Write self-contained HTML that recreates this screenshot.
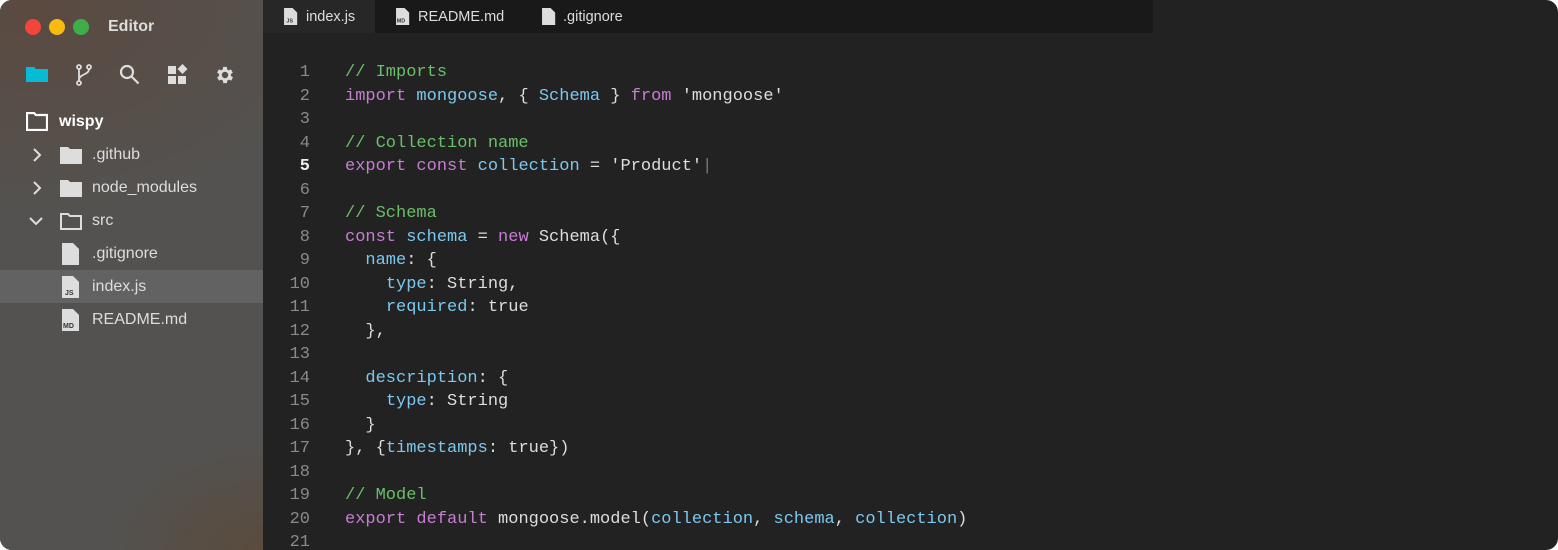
<!DOCTYPE html>
<html><head><style>
*{margin:0;padding:0;box-sizing:border-box}
body{width:1558px;height:550px;background:#fff;overflow:hidden;font-family:"Liberation Sans",sans-serif}
.win{position:absolute;left:0;top:0;width:1558px;height:550px;border-radius:12px;overflow:hidden;background:#222}
.side{position:absolute;left:0;top:0;width:263px;height:550px;background:radial-gradient(ellipse 320px 220px at 30px 0px,#5b4a40,rgba(83,82,80,0) 100%),radial-gradient(ellipse 160px 110px at 263px 550px,#5a4b3d,rgba(83,82,80,0) 100%),#535250}
.dot{position:absolute;top:19px;width:16px;height:16px;border-radius:50%}
.title{position:absolute;left:108px;top:18px;color:#ddd;font-size:16px;font-weight:bold}
.ic{position:absolute;top:64px}
.row{position:absolute;left:0;width:263px;height:33px;color:#ddd;font-size:16px}
.row span{position:absolute;top:8px}
.tabs{position:absolute;left:263px;top:0;width:890px;height:33px;background:#191919}
.tab{position:absolute;top:0;height:33px;color:#ddd;font-size:14.5px}
.tab span{position:absolute;top:9px}
pre{position:absolute;top:61px;font-family:"Liberation Mono",monospace;font-size:17px;line-height:23.5px;color:#ddd}
.ln{left:270px;width:40px;text-align:right;color:#8a8a8a}
.k{color:#c77dd3}.b{color:#7cc8ef}.g{color:#6abf69}
</style></head><body><div class="win">
<div class="side">
<div class="dot" style="left:25px;background:#f2453c"></div>
<div class="dot" style="left:49px;background:#f8bb10"></div>
<div class="dot" style="left:73px;background:#3fae4a"></div>
<div class="title">Editor</div>
<svg class="ic" style="left:26px" width="22" height="20" viewBox="0 0 22 20"><path d="M0 3h8l2 2h12v13H0z" fill="#06bcd4"/></svg>
<svg class="ic" style="left:74px" width="20" height="22" viewBox="0 0 20 22" fill="none" stroke="#ddd" stroke-width="1.8"><circle cx="5" cy="3" r="2"/><circle cx="15" cy="3" r="2"/><circle cx="5" cy="19" r="2"/><path d="M5 5v12M15 5c0 6-10 5-10 11"/></svg>
<svg class="ic" style="left:119px" width="22" height="22" viewBox="0 0 22 22" fill="none" stroke="#ddd" stroke-width="2.2"><circle cx="8" cy="8" r="6"/><path d="M12.5 12.5l7 7"/></svg>
<svg class="ic" style="left:167px" width="22" height="22" viewBox="0 0 22 22" fill="#ddd"><rect x="1" y="2" width="8" height="8"/><rect x="1" y="12" width="8" height="8"/><rect x="11" y="12" width="8" height="8"/><path d="M15.5 0l5 5-5 5-5-5z"/></svg>
<svg class="ic" style="left:214px" width="22" height="22" viewBox="0 0 24 24"><path fill="#ddd" d="M19.4 13a7.5 7.5 0 000-2l2.1-1.6-2-3.5-2.5 1a7 7 0 00-1.7-1L15 3.2h-4l-.4 2.7a7 7 0 00-1.7 1l-2.5-1-2 3.5L6.6 11a7.5 7.5 0 000 2l-2.1 1.6 2 3.5 2.5-1a7 7 0 001.7 1l.4 2.7h4l.4-2.7a7 7 0 001.7-1l2.5 1 2-3.5zM13 15.5a3.5 3.5 0 110-7 3.5 3.5 0 010 7z" transform="translate(-1 0)"/></svg>
<div class="row" style="top:105px"><svg style="position:absolute;left:26px;top:7px" width="22" height="19" viewBox="0 0 22 19" fill="none" stroke="#fff" stroke-width="2.2"><path d="M1 1h7l2 2h11v15H1z"/></svg><span style="left:59px;color:#fff;font-weight:bold">wispy</span></div>
<div class="row" style="top:138px"><svg style="position:absolute;left:32px;top:10px" width="10" height="14" fill="none" stroke="#ddd" stroke-width="2"><path d="M2 1l6 6-6 6"/></svg><svg style="position:absolute;left:60px;top:8px" width="22" height="18" viewBox="0 0 22 18"><path d="M0 1h8l2 2h12v15H0z" fill="#ddd"/></svg><span style="left:92px">.github</span></div>
<div class="row" style="top:171px"><svg style="position:absolute;left:32px;top:10px" width="10" height="14" fill="none" stroke="#ddd" stroke-width="2"><path d="M2 1l6 6-6 6"/></svg><svg style="position:absolute;left:60px;top:8px" width="22" height="18" viewBox="0 0 22 18"><path d="M0 1h8l2 2h12v15H0z" fill="#ddd"/></svg><span style="left:92px">node_modules</span></div>
<div class="row" style="top:204px"><svg style="position:absolute;left:29px;top:12px" width="14" height="10" fill="none" stroke="#ddd" stroke-width="2"><path d="M1 2l6 6 6-6"/></svg><svg style="position:absolute;left:60px;top:8px" width="22" height="18" viewBox="0 0 22 18" fill="none" stroke="#ddd" stroke-width="2"><path d="M1 2h7l2 2h11v13H1z"/></svg><span style="left:92px">src</span></div>
<div class="row" style="top:237px"><svg style="position:absolute;left:62px;top:6px" width="18" height="22" viewBox="0 0 18 22"><path d="M0 0h11l6 6v16H0z" fill="#ddd"/></svg><span style="left:92px">.gitignore</span></div>
<div class="row" style="top:270px;background:#626262"><svg style="position:absolute;left:62px;top:6px" width="18" height="22" viewBox="0 0 18 22"><path d="M0 0h11l6 6v16H0z" fill="#ddd"/><text x="3" y="19" font-size="7" font-family="Liberation Sans" font-weight="bold" fill="#333">JS</text></svg><span style="left:92px">index.js</span></div>
<div class="row" style="top:303px"><svg style="position:absolute;left:62px;top:6px" width="18" height="22" viewBox="0 0 18 22"><path d="M0 0h11l6 6v16H0z" fill="#ddd"/><text x="1" y="19" font-size="7" font-family="Liberation Sans" font-weight="bold" fill="#333">MD</text></svg><span style="left:92px">README.md</span></div>
</div>
<div class="tabs">
<div class="tab" style="left:0;width:112px;background:#272727"><svg style="position:absolute;left:21px;top:8px" width="14" height="17" viewBox="0 0 18 22"><path d="M0 0h11l6 6v16H0z" fill="#ddd"/><text x="3" y="19" font-size="7" font-weight="bold" fill="#333">JS</text></svg><span style="left:43px">index.js</span></div>
<div class="tab" style="left:112px;width:150px"><svg style="position:absolute;left:21px;top:8px" width="14" height="17" viewBox="0 0 18 22"><path d="M0 0h11l6 6v16H0z" fill="#ddd"/><text x="1" y="19" font-size="7" font-weight="bold" fill="#333">MD</text></svg><span style="left:43px">README.md</span></div>
<div class="tab" style="left:262px;width:150px"><svg style="position:absolute;left:17px;top:8px" width="14" height="17" viewBox="0 0 18 22"><path d="M0 0h11l6 6v16H0z" fill="#ddd"/></svg><span style="left:38px">.gitignore</span></div>
</div>
<pre class="ln">1
2
3
4
<span style="color:#eee;font-weight:bold">5</span>
6
7
8
9
10
11
12
13
14
15
16
17
18
19
20
21</pre>
<pre style="left:345px"><span class="g">// Imports</span>
<span class="k">import</span> <span class="b">mongoose</span>, { <span class="b">Schema</span> } <span class="k">from</span> 'mongoose'

<span class="g">// Collection name</span>
<span class="k">export</span> <span class="k">const</span> <span class="b">collection</span> = 'Product'<span style="color:#777">|</span>

<span class="g">// Schema</span>
<span class="k">const</span> <span class="b">schema</span> = <span class="k">new</span> Schema({
  <span class="b">name</span>: {
    <span class="b">type</span>: String,
    <span class="b">required</span>: true
  },

  <span class="b">description</span>: {
    <span class="b">type</span>: String
  }
}, {<span class="b">timestamps</span>: true})

<span class="g">// Model</span>
<span class="k">export</span> <span class="k">default</span> mongoose.model(<span class="b">collection</span>, <span class="b">schema</span>, <span class="b">collection</span>)
</pre>
</div></body></html>
